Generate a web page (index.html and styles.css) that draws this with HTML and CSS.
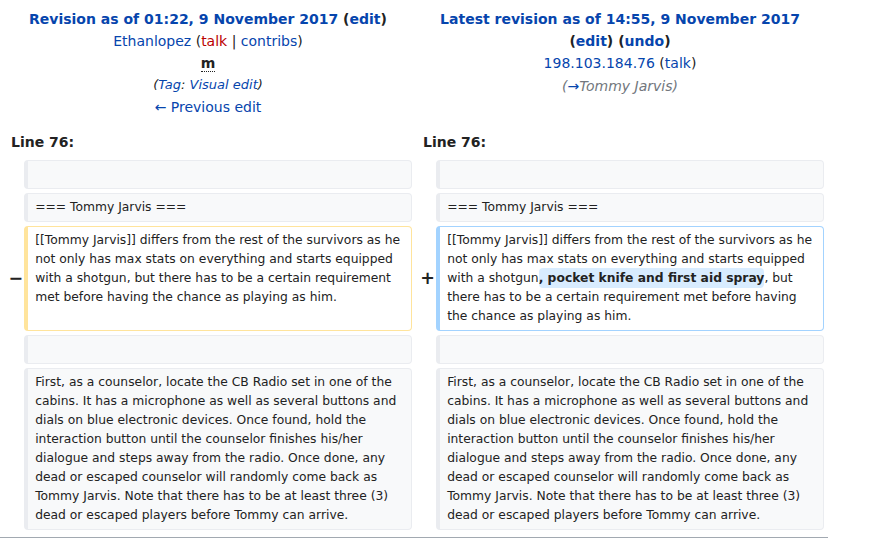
FILE: index.html
```html
<!DOCTYPE html>
<html lang="en">
<head>
<meta charset="utf-8">
<title>Diff</title>
<link rel="stylesheet" href="styles.css">
</head>
<body>
<div class="content">
<table class="diff">
  <colgroup>
    <col class="col-marker">
    <col class="col-content">
    <col class="col-marker">
    <col class="col-content">
  </colgroup>
  <tr class="title-row">
    <td colspan="2" class="otitle">
      <div><strong><a class="link" href="#">Revision as of 01:22, 9 November 2017</a> <span class="paren">(<a class="link" href="#">edit</a>)</span></strong></div>
      <div><a class="link" href="#">Ethanlopez</a> (<a class="red" href="#">talk</a> | <a class="link" href="#">contribs</a>)</div>
      <div><abbr class="minor" title="This is a minor edit">m</abbr></div>
      <div class="tags">(<a class="link" href="#">Tag</a>: <a class="link" href="#">Visual edit</a>)</div>
      <div><a class="link" href="#">← Previous edit</a></div>
    </td>
    <td colspan="2" class="ntitle">
      <div><strong><a class="link" href="#">Latest revision as of 14:55, 9 November 2017</a> <span class="paren">(<a class="link" href="#">edit</a>)</span> <span class="paren">(<a class="link" href="#">undo</a>)</span></strong></div>
      <div><a class="link" href="#">198.103.184.76</a> (<a class="link" href="#">talk</a>)</div>
      <div class="comment">(<a class="link" href="#">→</a>Tommy Jarvis)</div>
    </td>
  </tr>
  <tr>
    <td colspan="2" class="lineno">Line 76:</td>
    <td colspan="2" class="lineno">Line 76:</td>
  </tr>
  <tr>
    <td class="marker"></td>
    <td class="ctx"><div><br></div></td>
    <td class="marker"></td>
    <td class="ctx"><div><br></div></td>
  </tr>
  <tr>
    <td class="marker"></td>
    <td class="ctx"><div>=== Tommy Jarvis ===</div></td>
    <td class="marker"></td>
    <td class="ctx"><div>=== Tommy Jarvis ===</div></td>
  </tr>
  <tr>
    <td class="marker">−</td>
    <td class="deleted"><div>[[Tommy Jarvis]] differs from the rest of the survivors as he not only has max stats on everything and starts equipped with a shotgun, but there has to be a certain requirement met before having the chance as playing as him.</div></td>
    <td class="marker">+</td>
    <td class="added"><div>[[Tommy Jarvis]] differs from the rest of the survivors as he not only has max stats on everything and starts equipped with a shotgun<ins class="change">, pocket knife and first aid spray</ins>, but there has to be a certain requirement met before having the chance as playing as him.</div></td>
  </tr>
  <tr>
    <td class="marker"></td>
    <td class="ctx"><div><br></div></td>
    <td class="marker"></td>
    <td class="ctx"><div><br></div></td>
  </tr>
  <tr>
    <td class="marker"></td>
    <td class="ctx"><div>First, as a counselor, locate the CB Radio set in one of the cabins. It has a microphone as well as several buttons and dials on blue electronic devices. Once found, hold the interaction button until the counselor finishes his/her dialogue and steps away from the radio. Once done, any dead or escaped counselor will randomly come back as Tommy Jarvis. Note that there has to be at least three (3) dead or escaped players before Tommy can arrive.</div></td>
    <td class="marker"></td>
    <td class="ctx"><div>First, as a counselor, locate the CB Radio set in one of the cabins. It has a microphone as well as several buttons and dials on blue electronic devices. Once found, hold the interaction button until the counselor finishes his/her dialogue and steps away from the radio. Once done, any dead or escaped counselor will randomly come back as Tommy Jarvis. Note that there has to be at least three (3) dead or escaped players before Tommy can arrive.</div></td>
  </tr>
</table>
<hr class="divider">
</div>
</body>
</html>
```

FILE: styles.css
```css
html, body {
  margin: 0;
  padding: 0;
  background: #ffffff;
}
body {
  font-family: "DejaVu Sans", sans-serif;
  color: #222222;
}
.content {
  width: 828px;
  font-size: 14px;
  line-height: 1.6;
}
table.diff {
  width: 100%;
  table-layout: fixed;
  border-spacing: 4px;
  border: none;
  margin: 0;
  background: #ffffff;
}
.col-marker { width: 2%; }
.col-content { width: 48%; }
table.diff td {
  padding: 4px 7px;
}
table.diff td.otitle, table.diff td.ntitle {
  text-align: center;
  vertical-align: top;
  padding-top: 3.6px;
}
a.link {
  color: #0645ad;
  text-decoration: none;
}
a.red {
  color: #ba0000;
  text-decoration: none;
}
.minor {
  font-weight: bold;
  text-decoration: none;
  border-bottom: 1px dotted #222222;
  cursor: help;
}
.tags {
  font-style: italic;
  font-size: 13px;
}
.comment {
  font-style: italic;
  color: #72777d;
}
table.diff td.lineno {
  font-weight: bold;
  padding-top: 4.6px;
  padding-bottom: 3px;
}
table.diff td.marker {
  text-align: right;
  font-weight: bold;
  font-size: 1.25em;
  line-height: 1.2;
  padding: 0.25em;
}
.ctx, .deleted, .added {
  font-size: 88%;
  line-height: 19px;
  vertical-align: top;
  white-space: pre-wrap;
  border-style: solid;
  border-width: 1px 1px 1px 4px;
  border-radius: 0.33em;
}
.ctx {
  background: #f8f9fa;
  border-color: #eaecf0;
  color: #222222;
}
.deleted { border-color: #ffe49c; }
.added { border-color: #a3d3ff; }
.ctx div, .deleted div, .added div {
  word-wrap: break-word;
}
.change {
  font-weight: bold;
  text-decoration: none;
  background: #d8ecff;
  border-radius: 0.33em;
  padding: 0.25em 0;
}
.divider {
  margin: 3px 0 0;
  border: 0;
  height: 1px;
  background: #a2a9b1;
}
```
